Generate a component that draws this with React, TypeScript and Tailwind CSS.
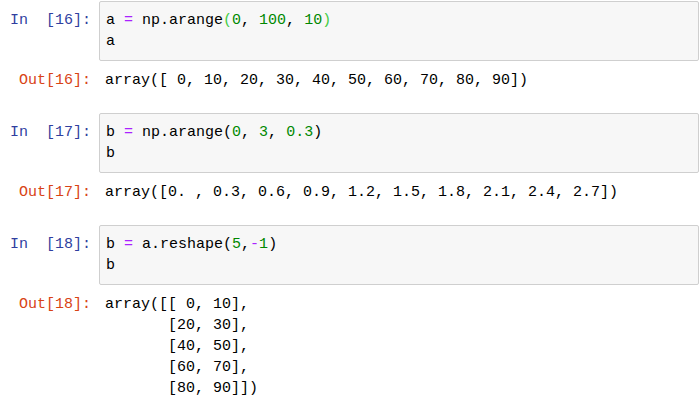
import React from "react";

const mono = { fontFamily: '"Liberation Mono", "DejaVu Sans Mono", monospace' };

const Op = ({ children }: { children: React.ReactNode }) => <span className="text-[#aa22ff]">{children}</span>;
const Num = ({ children }: { children: React.ReactNode }) => <span className="text-[#008800]">{children}</span>;
const MB = ({ children }: { children: React.ReactNode }) => <span className="text-[#44cc44]">{children}</span>;

function Cell({ n, code, out }: { n: number; code: React.ReactNode; out: string }) {
  return (
    <div className="flex flex-col">
      <div className="flex">
        <div className="w-[99px] shrink-0 pr-[8px] pt-[9px] text-right leading-[21px] whitespace-pre text-[#303f9f]">
          {`In  [${n}]:`}
        </div>
        <div className="flex-1 rounded-[2px] border border-[#cfcfcf] bg-[#f7f7f7] px-[6px] py-[8px] leading-[21px] whitespace-pre text-black">
          {code}
        </div>
      </div>
      <div className="flex pt-[9px]">
        <div className="w-[99px] shrink-0 pr-[8px] text-right leading-[21px] whitespace-pre text-[#d84315]">
          {`Out[${n}]:`}
        </div>
        <div className="flex-1 pl-[6px] leading-[21px] whitespace-pre text-black">{out}</div>
      </div>
    </div>
  );
}

export default function App() {
  return (
    <div className="w-[699px] h-[409px] overflow-hidden bg-white pt-[1px] text-[15px]" style={mono}>
      <div className="flex flex-col gap-[22px]">
        <Cell
          n={16}
          code={
            <>
              {"a "}
              <Op>=</Op>
              {" np.arange"}
              <MB>(</MB>
              <Num>0</Num>
              {", "}
              <Num>100</Num>
              {", "}
              <Num>10</Num>
              <MB>)</MB>
              {"\na"}
            </>
          }
          out="array([ 0, 10, 20, 30, 40, 50, 60, 70, 80, 90])"
        />
        <Cell
          n={17}
          code={
            <>
              {"b "}
              <Op>=</Op>
              {" np.arange("}
              <Num>0</Num>
              {", "}
              <Num>3</Num>
              {", "}
              <Num>0.3</Num>
              {")\nb"}
            </>
          }
          out="array([0. , 0.3, 0.6, 0.9, 1.2, 1.5, 1.8, 2.1, 2.4, 2.7])"
        />
        <Cell
          n={18}
          code={
            <>
              {"b "}
              <Op>=</Op>
              {" a.reshape("}
              <Num>5</Num>
              {","}
              <Op>-</Op>
              <Num>1</Num>
              {")\nb"}
            </>
          }
          out={"array([[ 0, 10],\n       [20, 30],\n       [40, 50],\n       [60, 70],\n       [80, 90]])"}
        />
      </div>
    </div>
  );
}
